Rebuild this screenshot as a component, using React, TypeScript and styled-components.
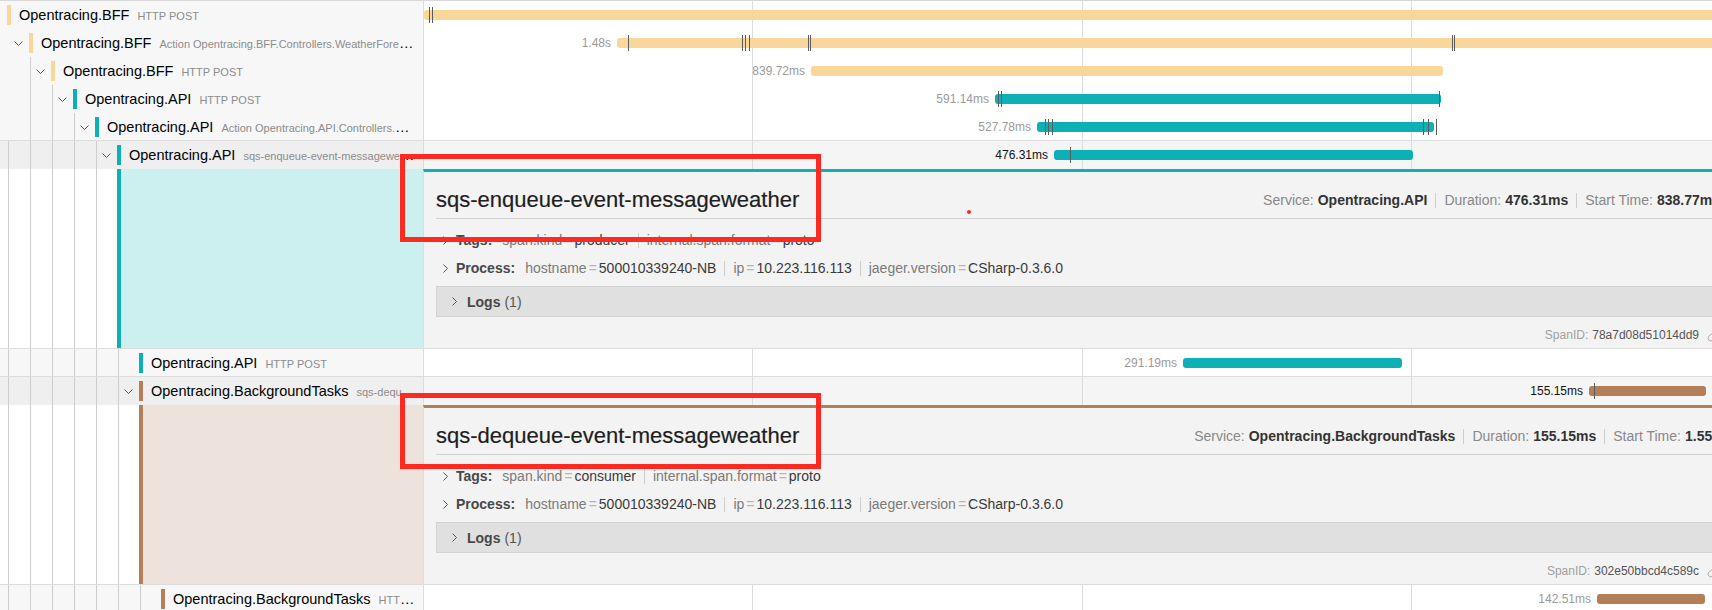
import React from "react";
import styled, { createGlobalStyle } from "styled-components";
import { Link } from "lucide-react";

const NAME_W = 423;
const VIEW_W = 1317;

const COLORS = {
  bff: { main: "#f9d79b", tint: "#fdf3e1" },
  api: { main: "#0db1b5", tint: "#ccefef" },
  bg: { main: "#b47e58", tint: "#eee3dc" },
};
type Svc = keyof typeof COLORS;

interface SpanData {
  kind: "span";
  service: string;
  op: string;
  svc: Svc;
  depth: number;
  toggle: boolean;
  guides: boolean[];
  start: number;
  end: number;
  label?: string;
  ticks?: number[];
  expanded?: boolean;
}

interface DetailData {
  kind: "detail";
  svc: Svc;
  guides: boolean[];
  title: string;
  service: string;
  duration: string;
  startTime: string;
  tags: [string, string][];
  spanId: string;
}

const PROCESS: [string, string][] = [
  ["hostname", "500010339240-NB"],
  ["ip", "10.223.116.113"],
  ["jaeger.version", "CSharp-0.3.6.0"],
];

const all = (n: number) => Array.from({ length: n }, () => true);
const first = (n: number) => Array.from({ length: n }, (_, i) => i > 0);

const ITEMS: (SpanData | DetailData)[] = [
  { kind: "span", service: "Opentracing.BFF", op: "HTTP POST", svc: "bff", depth: 0, toggle: false, guides: [], start: 424, end: 1760, ticks: [429, 432] },
  { kind: "span", service: "Opentracing.BFF", op: "Action Opentracing.BFF.Controllers.WeatherForecastController.Get (Opentracing.BFF)", svc: "bff", depth: 1, toggle: true, guides: first(1), start: 617, end: 1760, label: "1.48s", ticks: [628, 742, 745, 749, 808, 810, 1452, 1454] },
  { kind: "span", service: "Opentracing.BFF", op: "HTTP POST", svc: "bff", depth: 2, toggle: true, guides: first(2), start: 811, end: 1443, label: "839.72ms" },
  { kind: "span", service: "Opentracing.API", op: "HTTP POST", svc: "api", depth: 3, toggle: true, guides: first(3), start: 995, end: 1441, label: "591.14ms", ticks: [998, 1001, 1439] },
  { kind: "span", service: "Opentracing.API", op: "Action Opentracing.API.Controllers.WeatherForecastController.Post (Opentracing.API)", svc: "api", depth: 4, toggle: true, guides: first(4), start: 1037, end: 1434, label: "527.78ms", ticks: [1045, 1048, 1052, 1423, 1428, 1436] },
  { kind: "span", service: "Opentracing.API", op: "sqs-enqueue-event-messageweather", svc: "api", depth: 5, toggle: true, guides: all(5), start: 1054, end: 1413, label: "476.31ms", ticks: [1070], expanded: true },
  { kind: "detail", svc: "api", guides: all(5), title: "sqs-enqueue-event-messageweather", service: "Opentracing.API", duration: "476.31ms", startTime: "838.77ms", tags: [["span.kind", "producer"], ["internal.span.format", "proto"]], spanId: "78a7d08d51014dd9" },
  { kind: "span", service: "Opentracing.API", op: "HTTP POST", svc: "api", depth: 6, toggle: false, guides: all(6), start: 1183, end: 1402, label: "291.19ms" },
  { kind: "span", service: "Opentracing.BackgroundTasks", op: "sqs-dequeue-event-messageweather", svc: "bg", depth: 6, toggle: true, guides: all(6), start: 1589, end: 1706, label: "155.15ms", ticks: [1594], expanded: true },
  { kind: "detail", svc: "bg", guides: all(6), title: "sqs-dequeue-event-messageweather", service: "Opentracing.BackgroundTasks", duration: "155.15ms", startTime: "1.55s", tags: [["span.kind", "consumer"], ["internal.span.format", "proto"]], spanId: "302e50bbcd4c589c" },
  { kind: "span", service: "Opentracing.BackgroundTasks", op: "HTTP POST", svc: "bg", depth: 7, toggle: false, guides: all(7), start: 1597, end: 1705, label: "142.51ms" },
];

const GlobalStyle = createGlobalStyle`
  html, body { margin: 0; padding: 0; overflow: hidden; background: #fff; }
  body { font-family: "Liberation Sans", Arial, Helvetica, sans-serif; color: #000; }
  * { box-sizing: border-box; }
`;

const Page = styled.div`
  position: relative;
  width: ${NAME_W + VIEW_W}px;
  border-top: 1px solid #d8d8d8;
`;

const Row = styled.div<{ $expanded?: boolean }>`
  position: relative;
  display: flex;
  height: 28px;
  z-index: ${(p) => (p.$expanded ? 1 : 0)};
  box-shadow: ${(p) => (p.$expanded ? "0 -1px 0 #dcdcdc" : "none")};
`;

const NameCol = styled.div<{ $expanded?: boolean }>`
  flex: none;
  width: ${NAME_W}px;
  display: flex;
  align-items: stretch;
  padding: 0 5px 0 8px;
  background: ${(p) => (p.$expanded ? "#efefef" : "#f7f7f7")};
`;

const Guide = styled.span<{ $visible: boolean }>`
  flex: none;
  width: 22px;
  border-left: 1px solid ${(p) => (p.$visible ? "#cdcdcd" : "transparent")};
  display: flex;
  align-items: center;
  justify-content: center;
  padding-right: 2px;
`;

const Name = styled.div<{ $color: string }>`
  flex: 1;
  min-width: 0;
  margin-left: -1px;
  align-self: center;
  height: 20px;
  border-left: 4px solid ${(p) => p.$color};
  padding-left: 8px;
  display: flex;
  align-items: center;
`;

const NameText = styled.span`
  flex: 1;
  min-width: 0;
  overflow: hidden;
  text-overflow: ellipsis;
  white-space: nowrap;
  font-size: 14.5px;
  line-height: 20px;
  color: #000;
`;

const OpName = styled.small`
  font-size: 11px;
  color: #8c8c8c;
  padding-left: 8px;
`;

const ViewCol = styled.div<{ $expanded?: boolean }>`
  position: relative;
  flex: 1;
  background: ${(p) => (p.$expanded ? "#f5f5f5" : "#fff")};
`;

const GridLine = styled.span<{ $at: number }>`
  position: absolute;
  top: 0;
  bottom: 0;
  left: ${(p) => p.$at}%;
  width: 1px;
  background: #dcdcdc;
`;

const Bar = styled.div<{ $color: string }>`
  position: absolute;
  top: 9px;
  height: 10px;
  border-radius: 3px;
  background: ${(p) => p.$color};
`;

const BarLabel = styled.span<{ $strong?: boolean }>`
  position: absolute;
  right: calc(100% + 6px);
  top: -3px;
  line-height: 16px;
  font-size: 12px;
  white-space: nowrap;
  color: ${(p) => (p.$strong ? "#111" : "#9a9a9a")};
`;

const Tick = styled.span`
  position: absolute;
  top: -3px;
  width: 1px;
  height: 16px;
  background: #5c5c5c;
`;

const DetailRow = styled.div`
  display: flex;
  height: 180px;
  border-bottom: 1px solid #dcdcdc;
`;

const DetailLeft = styled.div`
  flex: none;
  width: ${NAME_W}px;
  display: flex;
  align-items: stretch;
  padding-left: 8px;
  background: #fff;
`;

const Accent = styled.div<{ $color: string; $tint: string }>`
  flex: 1;
  margin-left: -1px;
  border-left: 4px solid ${(p) => p.$color};
  background: ${(p) => p.$tint};
`;

const DetailRight = styled.div<{ $color: string }>`
  flex: 1;
  min-width: 0;
  border-left: 1px solid #dcdcdc;
  border-top: 3px solid ${(p) => p.$color};
  background: #f3f3f3;
  padding: 0 20px 0 12px;
`;

const Header = styled.div`
  display: flex;
  align-items: center;
  justify-content: space-between;
  padding: 15px 0 5px;
  border-bottom: 1px solid #d2d2d2;
`;

const Title = styled.h2`
  margin: 0;
  font-size: 22px;
  line-height: 26px;
  font-weight: 400;
  color: #1e1e1e;
  white-space: nowrap;
  -webkit-text-stroke: 0.2px #1e1e1e;
`;

const Overview = styled.div`
  display: flex;
  align-items: center;
  font-size: 14px;
  white-space: nowrap;
`;

const OvLabel = styled.span`
  color: #888;
`;

const OvValue = styled.strong`
  color: #333;
  margin-left: 4px;
`;

const Sep = styled.span`
  width: 1px;
  height: 15px;
  background: #cfcfcf;
  margin: 0 8px;
`;

const AttrRow = styled.div<{ $top: number }>`
  display: flex;
  align-items: center;
  height: 20px;
  margin-top: ${(p) => p.$top}px;
  padding-left: 7px;
  font-size: 14px;
  white-space: nowrap;
`;

const AttrLabel = styled.strong`
  color: #484848;
  margin: 0 10px 0 8px;
`;

const Key = styled.span`
  color: #7a7a7a;
`;

const Eq = styled.span`
  color: #b5b5b5;
  margin: 0 2px;
`;

const Val = styled.span`
  color: #3a3a3a;
`;

const LogsBox = styled.div`
  display: flex;
  align-items: center;
  height: 31px;
  margin-top: 8px;
  padding-left: 15px;
  border: 1px solid #d3d3d3;
  background: #e0e0e0;
  font-size: 14px;
`;

const LogsLabel = styled.strong`
  color: #484848;
  margin-left: 10px;
`;

const LogsCount = styled.span`
  color: #555;
  margin-left: 4px;
`;

const SpanIdRow = styled.div`
  display: flex;
  align-items: center;
  justify-content: flex-end;
  height: 20px;
  margin-top: 8px;
  font-size: 12px;
  color: #a0a0a0;
`;

const SpanIdValue = styled.span`
  color: #555;
  margin-left: 4px;
`;

const LinkIcon = styled(Link)`
  margin-left: 8px;
  color: #9a9a9a;
`;

const Annotation = styled.div<{ $x: number; $y: number; $w: number; $h: number }>`
  position: absolute;
  left: ${(p) => p.$x}px;
  top: ${(p) => p.$y}px;
  width: ${(p) => p.$w}px;
  height: ${(p) => p.$h}px;
  border: 5px solid #fd2a21;
  pointer-events: none;
  z-index: 5;
`;

const Dot = styled.span`
  position: absolute;
  left: 967px;
  top: 209px;
  width: 4px;
  height: 4px;
  border-radius: 50%;
  background: #f52a22;
  z-index: 5;
`;

const DownChevron = () => (
  <svg width="9" height="5" viewBox="0 0 9 5" fill="none">
    <polyline points="0.5,0.5 4.5,4.5 8.5,0.5" stroke="#555" strokeWidth="1" />
  </svg>
);

const RightChevron = () => (
  <svg width="5" height="9" viewBox="0 0 5 9" fill="none">
    <polyline points="0.5,0.5 4.5,4.5 0.5,8.5" stroke="#555" strokeWidth="1" />
  </svg>
);

const Grid = () => (
  <>
    {[0, 25, 50, 75].map((at) => (
      <GridLine key={at} $at={at} />
    ))}
  </>
);

const SpanRow = ({ s }: { s: SpanData }) => {
  const color = COLORS[s.svc].main;
  return (
    <Row $expanded={s.expanded}>
      <NameCol $expanded={s.expanded}>
        {s.guides.map((vis, k) => (
          <Guide key={k} $visible={vis}>
            {s.toggle && k === s.depth - 1 ? <DownChevron /> : null}
          </Guide>
        ))}
        <Name $color={color}>
          <NameText>
            {s.service}
            <OpName>{s.op}</OpName>
          </NameText>
        </Name>
      </NameCol>
      <ViewCol $expanded={s.expanded}>
        <Grid />
        <Bar $color={color} style={{ left: s.start - NAME_W, width: s.end - s.start }}>
          {s.label ? <BarLabel $strong={s.expanded}>{s.label}</BarLabel> : null}
          {(s.ticks || []).map((t) => (
            <Tick key={t} style={{ left: t - s.start }} />
          ))}
        </Bar>
      </ViewCol>
    </Row>
  );
};

const KeyValues = ({ items }: { items: [string, string][] }) => (
  <>
    {items.map(([k, v], i) => (
      <React.Fragment key={k}>
        {i > 0 ? <Sep /> : null}
        <Key>{k}</Key>
        <Eq>=</Eq>
        <Val>{v}</Val>
      </React.Fragment>
    ))}
  </>
);

const Detail = ({ d }: { d: DetailData }) => {
  const c = COLORS[d.svc];
  return (
    <DetailRow>
      <DetailLeft>
        {d.guides.map((vis, k) => (
          <Guide key={k} $visible={vis} />
        ))}
        <Accent $color={c.main} $tint={c.tint} />
      </DetailLeft>
      <DetailRight $color={c.main}>
        <Header>
          <Title>{d.title}</Title>
          <Overview>
            <OvLabel>Service:</OvLabel>
            <OvValue>{d.service}</OvValue>
            <Sep />
            <OvLabel>Duration:</OvLabel>
            <OvValue>{d.duration}</OvValue>
            <Sep />
            <OvLabel>Start Time:</OvLabel>
            <OvValue>{d.startTime}</OvValue>
          </Overview>
        </Header>
        <AttrRow $top={11}>
          <RightChevron />
          <AttrLabel>Tags:</AttrLabel>
          <KeyValues items={d.tags} />
        </AttrRow>
        <AttrRow $top={8}>
          <RightChevron />
          <AttrLabel>Process:</AttrLabel>
          <KeyValues items={PROCESS} />
        </AttrRow>
        <LogsBox>
          <RightChevron />
          <LogsLabel>Logs</LogsLabel>
          <LogsCount>(1)</LogsCount>
        </LogsBox>
        <SpanIdRow>
          SpanID:
          <SpanIdValue>{d.spanId}</SpanIdValue>
          <LinkIcon size={13} strokeWidth={1.5} />
        </SpanIdRow>
      </DetailRight>
    </DetailRow>
  );
};

export default function App() {
  return (
    <>
      <GlobalStyle />
      <Page>
        {ITEMS.map((it, i) =>
          it.kind === "span" ? <SpanRow key={i} s={it} /> : <Detail key={i} d={it} />
        )}
        <Annotation $x={400} $y={153} $w={421} $h={88} />
        <Annotation $x={400} $y={392} $w={421} $h={76} />
        <Dot />
      </Page>
    </>
  );
}
